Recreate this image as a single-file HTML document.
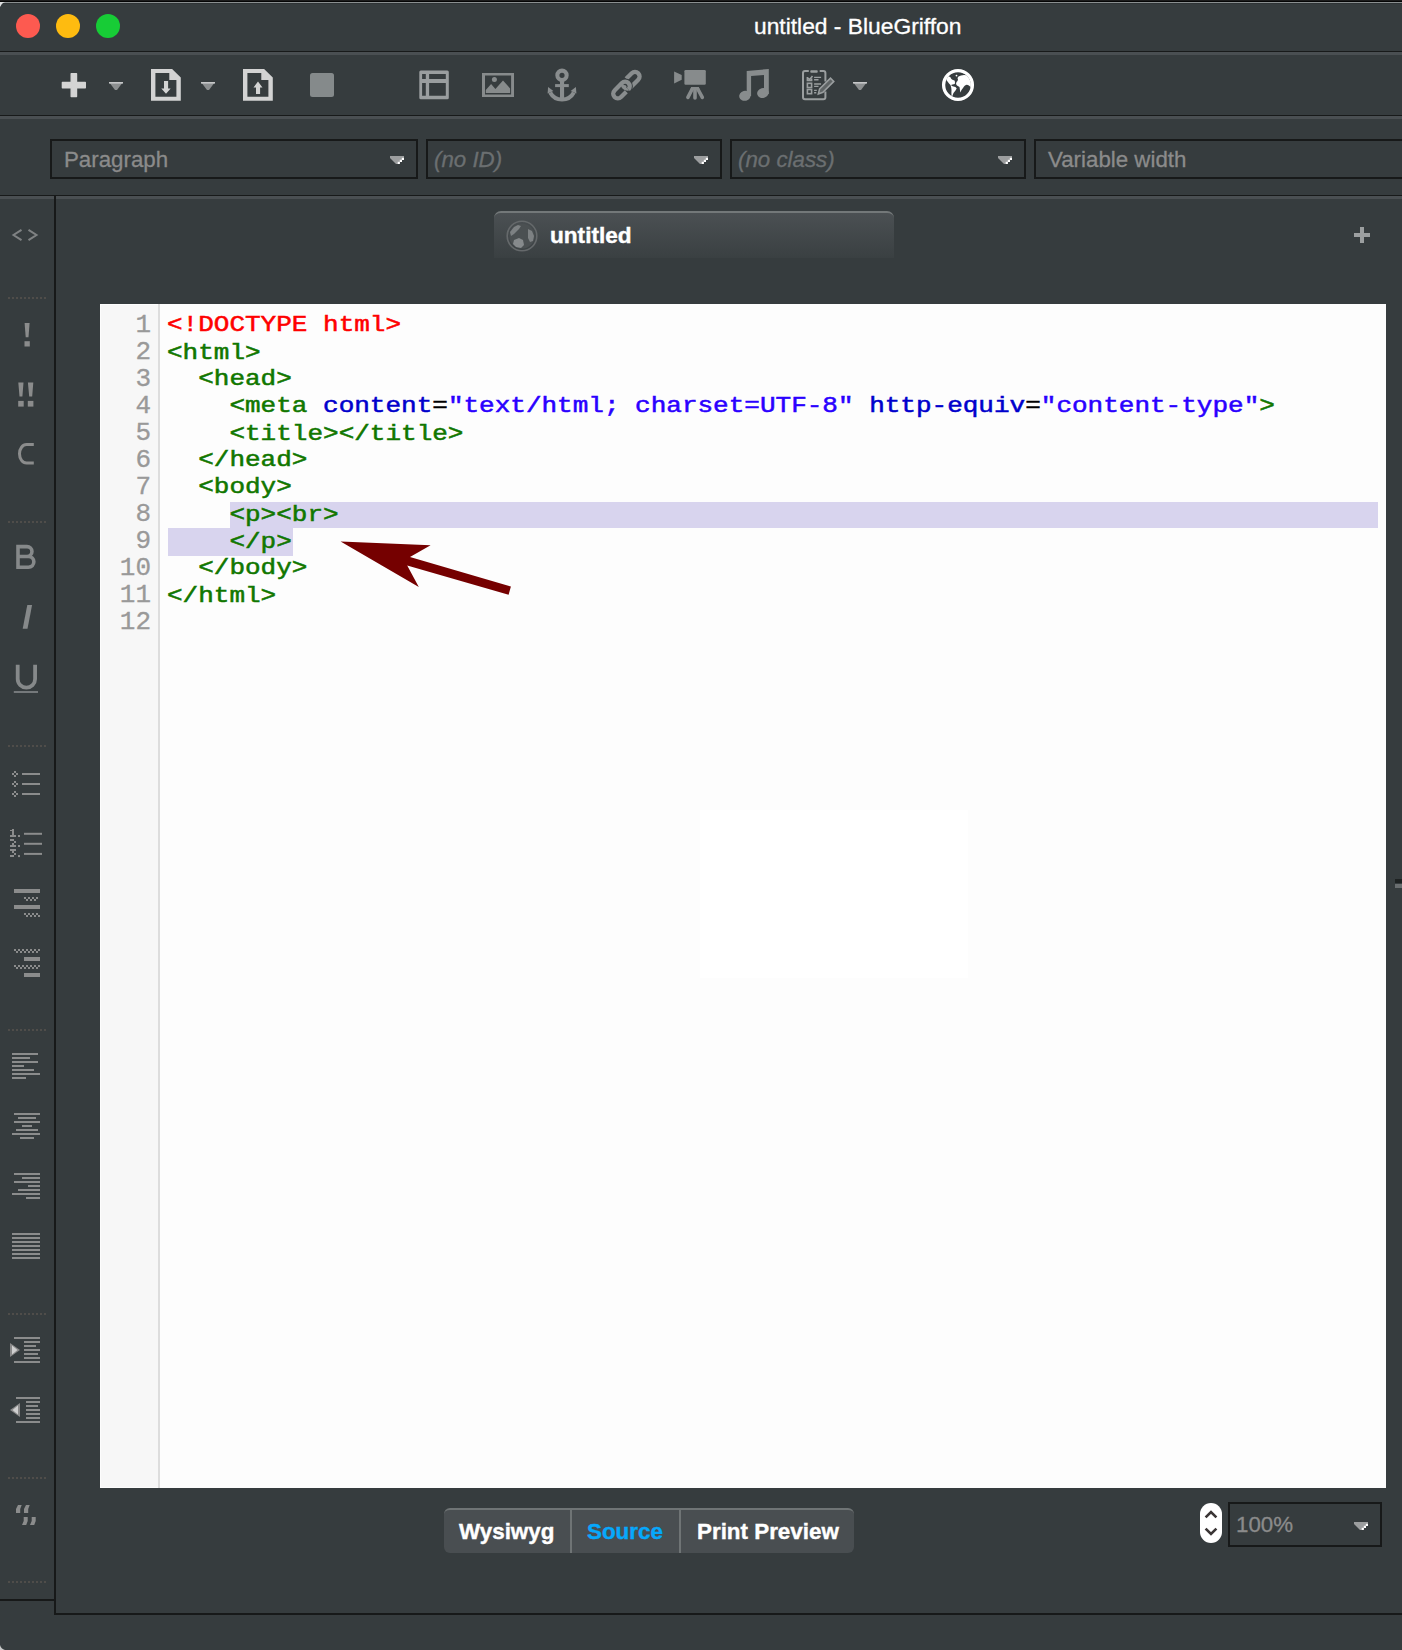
<!DOCTYPE html>
<html>
<head>
<meta charset="utf-8">
<style>
html,body{margin:0;padding:0;}
body{width:1402px;height:1650px;background:#363c3e;position:relative;overflow:hidden;font-family:"Liberation Sans",sans-serif;}
.a{position:absolute;}
.hl{position:absolute;left:0;width:1402px;}
.dd{position:absolute;top:139px;height:36px;border:2px solid #171919;background:#363c3e;}
.ddt{position:absolute;left:12px;top:6px;font-size:22.3px;color:#8b8b8b;white-space:nowrap;-webkit-text-stroke:0.3px currentColor;}
.ddi{font-style:italic;color:#6b6f71;}
.code{position:absolute;left:167px;top:312px;font-family:"Liberation Mono",monospace;font-size:26px;line-height:30.68px;white-space:pre;color:#000;transform:scale(1,0.88);transform-origin:0 0;-webkit-text-stroke:0.6px currentColor;}
.ln{position:absolute;left:101px;top:312px;width:50px;text-align:right;font-family:"Liberation Mono",monospace;font-size:26px;line-height:27px;color:#999;white-space:pre;-webkit-text-stroke:0.3px #999;}
.t{color:#117700;}
.m{color:#ff0000;}
.at{color:#0000cc;}
.s{color:#2a00ff;}
.eq{color:#000;}
.dots{position:absolute;left:8px;width:40px;height:2px;background-image:linear-gradient(90deg,#56524e 0 2px,transparent 2px 4px);background-size:4px 2px;}
</style>
</head>
<body>
<!-- title bar -->
<div class="hl" style="top:0;height:1px;background:#1c1c1c"></div>
<div class="hl" style="top:1px;height:1px;background:#050505"></div>
<div class="hl" style="top:2px;height:1px;background:#8a8f90"></div>
<div class="hl" style="top:3px;height:1px;background:#2f3436"></div>
<div class="a" style="left:16px;top:14px;width:24px;height:24px;border-radius:50%;background:#fd5a50"></div>
<div class="a" style="left:56px;top:14px;width:24px;height:24px;border-radius:50%;background:#febb10"></div>
<div class="a" style="left:96px;top:14px;width:24px;height:24px;border-radius:50%;background:#17cc36"></div>
<div class="a" style="left:754px;top:13.4px;font-size:22.8px;color:#fff;white-space:nowrap;-webkit-text-stroke:0.3px #fff">untitled - BlueGriffon</div>
<div class="hl" style="top:51px;height:1px;background:#181a1a"></div>
<div class="hl" style="top:52px;height:3px;background:#4a4f52"></div>

<!-- toolbar separator -->
<div class="hl" style="top:115px;height:1px;background:#181a1a"></div>
<div class="hl" style="top:116px;height:3px;background:#4a4f52"></div>

<!-- format toolbar -->
<div class="dd" style="left:50px;width:364px"><div class="ddt">Paragraph</div></div>
<div class="dd" style="left:426px;width:292px"><div class="ddt ddi" style="left:6px">(no ID)</div></div>
<div class="dd" style="left:730px;width:292px"><div class="ddt ddi" style="left:6px">(no class)</div></div>
<div class="dd" style="left:1034px;width:400px"><div class="ddt">Variable width</div></div>

<div class="hl" style="top:195px;height:1px;background:#181a1a"></div>
<div class="hl" style="top:196px;height:3px;background:#4a4f52"></div>

<!-- sidebar -->
<div class="a" style="left:54px;top:195px;width:2px;height:1420px;background:#171919"></div>
<div class="a" style="left:0;top:1599px;width:55px;height:2px;background:#171919"></div>
<div class="a" style="left:55px;top:1613px;width:1347px;height:2px;background:#171919"></div>

<!-- tab -->
<div class="a" style="left:494px;top:211px;width:400px;height:47px;border-radius:7px 7px 0 0;background:linear-gradient(#4b5053,#3a4042);border-top:2px solid #737879;box-sizing:border-box"></div>
<div class="a" style="left:550px;top:223px;font-size:22.6px;font-weight:bold;color:#fff;-webkit-text-stroke:0.4px #fff">untitled</div>

<!-- editor -->
<div class="a" style="left:100px;top:304px;width:1286px;height:1184px;background:#fdfdfd"></div>
<div class="a" style="left:700px;top:810px;width:268px;height:168px;background:#fff"></div>
<div class="a" style="left:101px;top:305px;width:57px;height:1182px;background:#f7f7f7"></div>
<div class="a" style="left:158px;top:304px;width:2px;height:1184px;background:#dddddd"></div>
<div class="a" style="left:230px;top:502px;width:1148px;height:26px;background:#d8d4ee"></div>
<div class="a" style="left:168px;top:528px;width:125px;height:28px;background:#d8d4ee"></div>
<div class="ln">1
2
3
4
5
6
7
8
9
10
11
12</div>
<div class="code"><span class="m">&lt;!DOCTYPE html&gt;</span>
<span class="t">&lt;html&gt;</span>
<span class="t">  &lt;head&gt;</span>
<span class="t">    &lt;meta</span> <span class="at">content</span><span class="eq">=</span><span class="s">"text/html; charset=UTF-8"</span> <span class="at">http-equiv</span><span class="eq">=</span><span class="s">"content-type"</span><span class="t">&gt;</span>
<span class="t">    &lt;title&gt;&lt;/title&gt;</span>
<span class="t">  &lt;/head&gt;</span>
<span class="t">  &lt;body&gt;</span>
<span class="t">    &lt;p&gt;&lt;br&gt;</span>
<span class="t">    &lt;/p&gt;</span>
<span class="t">  &lt;/body&gt;</span>
<span class="t">&lt;/html&gt;</span>
</div>

<!-- arrow -->
<svg class="a" style="left:0;top:0" width="1402" height="1650"><polygon fill="#750000" points="340.6,541.5 430.6,545.2 410,557.1 510.9,586.6 508.6,594.8 407.2,565.5 418.8,586.9"/></svg>

<!-- bottom buttons -->
<div class="a" style="left:444px;top:1508px;width:410px;height:45px;border-radius:6px;background:#494e51;border-top:2px solid #6f7475;box-sizing:border-box"></div>
<div class="a" style="left:570px;top:1510px;width:2px;height:43px;background:#6f7475"></div>
<div class="a" style="left:679px;top:1510px;width:2px;height:43px;background:#6f7475"></div>
<div class="a" style="left:459px;top:1519px;font-size:22.4px;font-weight:bold;color:#fff;-webkit-text-stroke:0.4px #fff">Wysiwyg</div>
<div class="a" style="left:587px;top:1519px;font-size:22.4px;font-weight:bold;color:#06a8fc;-webkit-text-stroke:0.4px #06a8fc">Source</div>
<div class="a" style="left:697px;top:1519px;font-size:22.4px;font-weight:bold;color:#fff;-webkit-text-stroke:0.4px #fff">Print Preview</div>

<!-- zoom -->
<div class="a" style="left:1200px;top:1503px;width:22px;height:40px;border-radius:11px;background:#fff"></div>
<div class="dd" style="left:1228px;top:1502px;width:150px;height:41px"><div class="ddt" style="left:6px;top:8px">100%</div></div>
<!--ICONS-->
<svg class="a" style="left:0;top:0" width="1402" height="1650">
<path fill="#d4d4d4" stroke="#d4d4d4" stroke-width="1.4" stroke-linejoin="round" d="M71.2,73.7 h5.3 v8.8 h8.8 v5.3 h-8.8 v8.8 h-5.3 v-8.8 h-8.8 v-5.3 h8.8 z"/>
<path fill="#8c8f90" d="M109,82 h14 l-6,8 h-2 z"/><rect x="109" y="82" width="14" height="1.6" fill="#c6c7c8"/>
<path fill="#8c8f90" d="M201,82 h14 l-6,8 h-2 z"/><rect x="201" y="82" width="14" height="1.6" fill="#c6c7c8"/>
<path fill="#8c8f90" d="M853,82 h14 l-6,8 h-2 z"/><rect x="853" y="82" width="14" height="1.6" fill="#c6c7c8"/>
<path fill="#d3d3d3" fill-rule="evenodd" d="M151,69 L172.1,69 L180.8,77.6 L180.8,100.8 L151,100.8 Z M155.4,73.1 L169.3,73.1 L169.3,80.1 L176.4,80.1 L176.4,96.7 L155.4,96.7 Z"/>
<path fill="#d3d3d3" d="M164,81 h4.1 v7.4 h2.6 l-4.7,5.4 l-4.7,-5.4 h2.7 z"/>
<path fill="#d3d3d3" fill-rule="evenodd" d="M243,69 L264.1,69 L272.8,77.6 L272.8,100.8 L243,100.8 Z M247.4,73.1 L261.3,73.1 L261.3,80.1 L268.4,80.1 L268.4,96.7 L247.4,96.7 Z"/>
<path fill="#d3d3d3" d="M258,81.5 l4.5,6 h-2.4 v6.5 h-4.1 v-6.5 h-2.5 z"/>
<rect x="310" y="73" width="24" height="24" rx="2.5" fill="#858a8b"/>
<path fill="#9a9e9f" fill-rule="evenodd" d="M420.8,70.6 h26.5 a1.5,1.5 0 0 1 1.5,1.5 v25.6 a1.5,1.5 0 0 1 -1.5,1.5 h-26.5 a1.5,1.5 0 0 1 -1.5,-1.5 v-25.6 a1.5,1.5 0 0 1 1.5,-1.5 z M422.1,74 h3.7 v5.1 h-3.7 z M429.1,74 h16.7 v5.1 h-16.7 z M422.1,83 h3.7 v12.8 h-3.7 z M429.1,83 h16.7 v12.8 h-16.7 z"/>
<path fill="#878b8c" fill-rule="evenodd" d="M482,73 h32 v24 h-32 z M485,75.6 v18.9 h26.1 v-18.9 z"/>
<path fill="#878b8c" d="M485.8,90.1 L491.1,84.1 L495.4,89 L503,80.4 L510.1,88.4 L510.1,93.1 L485.8,93.1 Z"/><circle cx="494.4" cy="79.4" r="2.5" fill="#878b8c"/>
<g fill="#898d8e" transform="translate(542,65)"><path fill-rule="evenodd" d="M20,3.6 a6.7,6.7 0 1 1 0,13.4 a6.7,6.7 0 1 1 0,-13.4 z M20,7.7 a2.6,2.6 0 1 0 0,5.2 a2.6,2.6 0 1 0 0,-5.2 z"/><rect x="18" y="15" width="4.1" height="19"/><rect x="13.1" y="19.1" width="13.7" height="3"/><path d="M6.4,28.5 A15.5,15.5 0 0 0 33.6,28.5 L30.1,26.6 A11.5,11.5 0 0 1 9.9,26.6 Z"/><path d="M6.1,22 L5.6,28.6 L11.4,26 Z"/><path d="M33.9,22 L34.4,28.6 L28.6,26 Z"/></g>
<g transform="translate(626.5,85) rotate(-45)" fill="none" stroke-linecap="butt"><path d="M4.1,-4.6 L12,-4.6 A4.6,4.6 0 0 1 12,4.6 L1.4,4.6 A4.6,4.6 0 0 1 1.4,-4.6" stroke="#898d8e" stroke-width="4.3"/><path d="M-1.9,-4.6 A4.6,4.6 0 0 1 -1.9,4.6" stroke="#363c3e" stroke-width="6.3"/><path d="M-4.9,4.6 L-12.3,4.6 A4.6,4.6 0 0 1 -12.3,-4.6 L-1.9,-4.6 A4.6,4.6 0 0 1 -1.9,4.6" stroke="#898d8e" stroke-width="4.3"/></g>
<g fill="#878b8c" transform="translate(670,65)"><path d="M4.1,6.6 L11.7,10 L11.7,14.8 L4.1,18.5 Z"/><rect x="14.4" y="5.1" width="21.4" height="14.7" rx="1.2"/><path d="M21.2,22 h7.6 l1,3 h-9.6 z"/></g>
<g stroke="#878b8c" stroke-width="3.6" stroke-linecap="round" transform="translate(670,65)"><line x1="22.2" y1="24" x2="17.9" y2="32.4"/><line x1="25" y1="24" x2="25" y2="33"/><line x1="27.8" y1="24" x2="32.3" y2="32.4"/></g>
<g fill="#888c8d" transform="translate(734,65)"><path d="M12.7,6 L34.8,4 L34.8,29 L30,29 L30,10 L17.1,11.1 L17.1,31 L12.7,31 Z"/><ellipse cx="10.9" cy="30.8" rx="5.8" ry="5" transform="rotate(-15 10.9 30.8)"/><ellipse cx="28.9" cy="28" rx="5.8" ry="5" transform="rotate(-15 28.9 28)"/></g>
<g transform="translate(798,65)" fill="none" stroke="#9a9e9f" stroke-width="2"><path d="M10.8,6.1 H7 a2,2 0 0 0 -2,2 V32.2 a2,2 0 0 0 2,2 H25.4 a2,2 0 0 0 2,-2 V26.5"/><path d="M27.4,16.4 V8.1 a2,2 0 0 0 -2,-2 H21.7"/><rect x="9.4" y="18.3" width="4.2" height="4.2" stroke-width="1.6"/><rect x="9.4" y="24.5" width="4.2" height="4.2" stroke-width="1.6"/><path d="M9.4,12 V15.5 H13.6 V13.5" stroke-width="1.6"/><path d="M10,13 L11.5,14.8 L14.5,11" stroke-width="1.6"/><path d="M16.1,12.4 H23.1 M16.1,14.7 H20.5 M16.1,19 H23.1 M16.1,21.4 H20.5 M16.1,25.4 H18.8 M16.1,27.7 H18.3" stroke-width="1.4"/><path d="M20.3,29 L21.6,24 L32.5,13.1 L35.8,16.4 L24.9,27.3 Z" stroke-width="1.5" fill="#5f6465"/></g><rect x="810.3" y="70.3" width="7.4" height="2.4" rx="0.8" fill="#9a9e9f"/>
<g transform="translate(938,65)"><circle cx="20" cy="20" r="12.9" fill="#ffffff"/><path fill="#363c3e" d="M10.2,10.5 L12,8.5 L16,7 L20,6.8 L24,7.3 L28.7,10.3 L26,10 L23,10.5 L20.5,11.5 L19.5,13 L20,14.5 L19.5,16 L18.5,17 L18,19 L19,20.5 L21.5,22 L22.3,27.5 L23.5,25 L25,23 L26,21.5 L27,20.5 L28.5,19.8 L30,20 L31.5,21 L32.5,22 L33,30 L28,33 L20,33.5 L15,32.5 L14.3,31 L15.5,28 L17.5,25.5 L18.7,23.5 L17.5,22 L15.5,21.5 L14,21 L13,20 L14.5,19.5 L16.8,19 L17,17 L16.5,15.5 L15,15 L14,14.5 L13,13.5 L12.7,12.5 L11.5,11.8 Z"/><path fill="#363c3e" d="M8,14.5 L9.5,16.5 L11,18.5 L12.5,20 L13.2,22.5 L13.5,25 L13.4,28 L13.6,31 L10,28.5 L7.5,25 L6.8,20 L7.2,16 Z"/><circle cx="18.5" cy="10.6" r="0.9" fill="#fff"/><circle cx="20" cy="20" r="14.4" fill="none" stroke="#ffffff" stroke-width="3.3"/></g>
<path fill="#9c9e9f" d="M390,156 h14 v2.5 l-6,5.5 h-2 l-6,-6 z"/><rect x="401.8" y="157.8" width="2.2" height="2.2" fill="#fff"/><rect x="399.8" y="159.8" width="2.2" height="2.2" fill="#fff"/><rect x="397.7" y="161.8" width="2.2" height="2.2" fill="#fff"/>
<path fill="#9c9e9f" d="M694,156 h14 v2.5 l-6,5.5 h-2 l-6,-6 z"/><rect x="705.8" y="157.8" width="2.2" height="2.2" fill="#fff"/><rect x="703.8" y="159.8" width="2.2" height="2.2" fill="#fff"/><rect x="701.7" y="161.8" width="2.2" height="2.2" fill="#fff"/>
<path fill="#9c9e9f" d="M998,156 h14 v2.5 l-6,5.5 h-2 l-6,-6 z"/><rect x="1009.8" y="157.8" width="2.2" height="2.2" fill="#fff"/><rect x="1007.8" y="159.8" width="2.2" height="2.2" fill="#fff"/><rect x="1005.7" y="161.8" width="2.2" height="2.2" fill="#fff"/>
<path fill="#9c9e9f" d="M1354,1522 h14 v2.5 l-6,5.5 h-2 l-6,-6 z"/><rect x="1365.8" y="1523.8" width="2.2" height="2.2" fill="#fff"/><rect x="1363.8" y="1525.8" width="2.2" height="2.2" fill="#fff"/><rect x="1361.7" y="1527.8" width="2.2" height="2.2" fill="#fff"/>
<path fill="#9c9fa0" d="M1360,227 h4 v6 h6 v4 h-6 v6 h-4 v-6 h-6 v-4 h6 z"/>
<g><circle cx="522" cy="236" r="14.8" fill="none" stroke="#65696b" stroke-width="1.6"/><circle cx="522" cy="236" r="12.6" fill="#4b5052"/><path fill="#7d8183" d="M510,232 L514,227 L518,225 L521,226 L519,229 L516,232 L514,234 L511,236 Z"/><path fill="#7d8183" d="M528,229 L532,231 L534,236 L533,241 L530,242 L528,238 Z"/><path fill="#868a8c" d="M514,240 L519,238 L523,240 L524,245 L521,248 L516,247 L513,244 Z"/></g>
<path fill="none" stroke="#3a3535" stroke-width="2.6" d="M1205.6,1517.4 L1211,1512 L1216.4,1517.4 M1205.6,1528.6 L1211,1534 L1216.4,1528.6"/>
<path fill="none" stroke="#7f8283" stroke-width="2" d="M21.5,229.8 L13.5,235 L21.5,240.2 M28.5,229.8 L36.5,235 L28.5,240.2"/>
<rect x="8" y="297" width="2" height="2" fill="#4f4d4a"/>
<rect x="12" y="297" width="2" height="2" fill="#4f4d4a"/>
<rect x="16" y="297" width="2" height="2" fill="#4f4d4a"/>
<rect x="20" y="297" width="2" height="2" fill="#4f4d4a"/>
<rect x="24" y="297" width="2" height="2" fill="#4f4d4a"/>
<rect x="28" y="297" width="2" height="2" fill="#4f4d4a"/>
<rect x="32" y="297" width="2" height="2" fill="#4f4d4a"/>
<rect x="36" y="297" width="2" height="2" fill="#4f4d4a"/>
<rect x="40" y="297" width="2" height="2" fill="#4f4d4a"/>
<rect x="44" y="297" width="2" height="2" fill="#4f4d4a"/>
<rect x="8" y="521" width="2" height="2" fill="#4f4d4a"/>
<rect x="12" y="521" width="2" height="2" fill="#4f4d4a"/>
<rect x="16" y="521" width="2" height="2" fill="#4f4d4a"/>
<rect x="20" y="521" width="2" height="2" fill="#4f4d4a"/>
<rect x="24" y="521" width="2" height="2" fill="#4f4d4a"/>
<rect x="28" y="521" width="2" height="2" fill="#4f4d4a"/>
<rect x="32" y="521" width="2" height="2" fill="#4f4d4a"/>
<rect x="36" y="521" width="2" height="2" fill="#4f4d4a"/>
<rect x="40" y="521" width="2" height="2" fill="#4f4d4a"/>
<rect x="44" y="521" width="2" height="2" fill="#4f4d4a"/>
<rect x="8" y="745" width="2" height="2" fill="#4f4d4a"/>
<rect x="12" y="745" width="2" height="2" fill="#4f4d4a"/>
<rect x="16" y="745" width="2" height="2" fill="#4f4d4a"/>
<rect x="20" y="745" width="2" height="2" fill="#4f4d4a"/>
<rect x="24" y="745" width="2" height="2" fill="#4f4d4a"/>
<rect x="28" y="745" width="2" height="2" fill="#4f4d4a"/>
<rect x="32" y="745" width="2" height="2" fill="#4f4d4a"/>
<rect x="36" y="745" width="2" height="2" fill="#4f4d4a"/>
<rect x="40" y="745" width="2" height="2" fill="#4f4d4a"/>
<rect x="44" y="745" width="2" height="2" fill="#4f4d4a"/>
<rect x="8" y="1029" width="2" height="2" fill="#4f4d4a"/>
<rect x="12" y="1029" width="2" height="2" fill="#4f4d4a"/>
<rect x="16" y="1029" width="2" height="2" fill="#4f4d4a"/>
<rect x="20" y="1029" width="2" height="2" fill="#4f4d4a"/>
<rect x="24" y="1029" width="2" height="2" fill="#4f4d4a"/>
<rect x="28" y="1029" width="2" height="2" fill="#4f4d4a"/>
<rect x="32" y="1029" width="2" height="2" fill="#4f4d4a"/>
<rect x="36" y="1029" width="2" height="2" fill="#4f4d4a"/>
<rect x="40" y="1029" width="2" height="2" fill="#4f4d4a"/>
<rect x="44" y="1029" width="2" height="2" fill="#4f4d4a"/>
<rect x="8" y="1313" width="2" height="2" fill="#4f4d4a"/>
<rect x="12" y="1313" width="2" height="2" fill="#4f4d4a"/>
<rect x="16" y="1313" width="2" height="2" fill="#4f4d4a"/>
<rect x="20" y="1313" width="2" height="2" fill="#4f4d4a"/>
<rect x="24" y="1313" width="2" height="2" fill="#4f4d4a"/>
<rect x="28" y="1313" width="2" height="2" fill="#4f4d4a"/>
<rect x="32" y="1313" width="2" height="2" fill="#4f4d4a"/>
<rect x="36" y="1313" width="2" height="2" fill="#4f4d4a"/>
<rect x="40" y="1313" width="2" height="2" fill="#4f4d4a"/>
<rect x="44" y="1313" width="2" height="2" fill="#4f4d4a"/>
<rect x="8" y="1477" width="2" height="2" fill="#4f4d4a"/>
<rect x="12" y="1477" width="2" height="2" fill="#4f4d4a"/>
<rect x="16" y="1477" width="2" height="2" fill="#4f4d4a"/>
<rect x="20" y="1477" width="2" height="2" fill="#4f4d4a"/>
<rect x="24" y="1477" width="2" height="2" fill="#4f4d4a"/>
<rect x="28" y="1477" width="2" height="2" fill="#4f4d4a"/>
<rect x="32" y="1477" width="2" height="2" fill="#4f4d4a"/>
<rect x="36" y="1477" width="2" height="2" fill="#4f4d4a"/>
<rect x="40" y="1477" width="2" height="2" fill="#4f4d4a"/>
<rect x="44" y="1477" width="2" height="2" fill="#4f4d4a"/>
<rect x="8" y="1581" width="2" height="2" fill="#4f4d4a"/>
<rect x="12" y="1581" width="2" height="2" fill="#4f4d4a"/>
<rect x="16" y="1581" width="2" height="2" fill="#4f4d4a"/>
<rect x="20" y="1581" width="2" height="2" fill="#4f4d4a"/>
<rect x="24" y="1581" width="2" height="2" fill="#4f4d4a"/>
<rect x="28" y="1581" width="2" height="2" fill="#4f4d4a"/>
<rect x="32" y="1581" width="2" height="2" fill="#4f4d4a"/>
<rect x="36" y="1581" width="2" height="2" fill="#4f4d4a"/>
<rect x="40" y="1581" width="2" height="2" fill="#4f4d4a"/>
<rect x="44" y="1581" width="2" height="2" fill="#4f4d4a"/>
<path fill="#8b8c8c" d="M24.6,323 h5 l-1.1,14.3 h-2.8 z"/><rect x="24.5" y="341.2" width="5.3" height="5.3" fill="#8b8c8c"/>
<path fill="#8b8c8c" d="M18.3,382.6 h5.2 l-1.1,13.9 h-2.9 z M27.9,382.6 h5.4 l-1.1,13.9 h-3 z"/><rect x="18.2" y="400.9" width="5.5" height="5.7" fill="#8b8c8c"/><rect x="27.8" y="400.9" width="5.6" height="5.7" fill="#8b8c8c"/>
<path fill="none" stroke="#8b8c8c" stroke-width="3" d="M33.8,444.5 H26.5 a7,9.3 0 0 0 0,18.6 H33.8"/>
<path fill="none" stroke="#86898a" stroke-width="3.6" d="M18,544.8 V569 M18,546.6 H27 a4.95,4.95 0 0 1 0,9.9 H18 M18,556.5 H28.5 a5.35,5.35 0 0 1 0,10.7 H18"/>
<path fill="#86898a" d="M27.3,605 h4.8 l-4.6,23.8 h-4.8 z"/>
<path fill="none" stroke="#86898a" stroke-width="3.8" d="M17.7,664.8 V679 a8.7,8.7 0 0 0 17.4,0 V664.8"/><rect x="13.8" y="691.2" width="24.2" height="1.6" fill="#86898a"/>
<rect x="14" y="771" width="2" height="2" fill="#8b8c8c"/>
<rect x="12" y="773" width="2" height="2" fill="#8b8c8c"/>
<rect x="16" y="773" width="2" height="2" fill="#8b8c8c"/>
<rect x="14" y="775" width="2" height="2" fill="#8b8c8c"/>
<rect x="22" y="773" width="18" height="2" fill="#8b8c8c"/>
<rect x="14" y="781" width="2" height="2" fill="#8b8c8c"/>
<rect x="12" y="783" width="2" height="2" fill="#8b8c8c"/>
<rect x="16" y="783" width="2" height="2" fill="#8b8c8c"/>
<rect x="14" y="785" width="2" height="2" fill="#8b8c8c"/>
<rect x="22" y="783" width="18" height="2" fill="#8b8c8c"/>
<rect x="14" y="791" width="2" height="2" fill="#8b8c8c"/>
<rect x="12" y="793" width="2" height="2" fill="#8b8c8c"/>
<rect x="16" y="793" width="2" height="2" fill="#8b8c8c"/>
<rect x="14" y="795" width="2" height="2" fill="#8b8c8c"/>
<rect x="22" y="793" width="18" height="2" fill="#8b8c8c"/>
<rect x="24" y="832.8" width="18" height="2" fill="#8b8c8c"/><rect x="18" y="835.0" width="2" height="2" fill="#8b8c8c"/>
<rect x="24" y="842.8" width="18" height="2" fill="#8b8c8c"/><rect x="18" y="845.0" width="2" height="2" fill="#8b8c8c"/>
<rect x="24" y="852.9" width="18" height="2" fill="#8b8c8c"/><rect x="18" y="855.1" width="2" height="2" fill="#8b8c8c"/>
<path fill="#8b8c8c" d="M12,829 h2 v6 h2 v2 h-6 v-2 h2 v-4 h-2 v-1 h2 z M10,839 h4 v2 h-4 z M14,841 h2 v2 h-2 z M12,843 h2 v2 h-2 z M10,845 h6 v2 h-6 z M10,849 h6 v2 h-6 z M12,851 h2 v2 h-2 z M14,853 h2 v2 h-2 z M10,855 h4 v2 h-4 z"/>
<rect x="14" y="889" width="26" height="4" fill="#8b8c8c"/><rect x="14" y="905" width="26" height="4" fill="#8b8c8c"/>
<rect x="24" y="897" width="2" height="2" fill="#8b8c8c"/>
<rect x="26" y="899" width="2" height="2" fill="#8b8c8c"/>
<rect x="28" y="897" width="2" height="2" fill="#8b8c8c"/>
<rect x="30" y="899" width="2" height="2" fill="#8b8c8c"/>
<rect x="32" y="897" width="2" height="2" fill="#8b8c8c"/>
<rect x="34" y="899" width="2" height="2" fill="#8b8c8c"/>
<rect x="36" y="897" width="2" height="2" fill="#8b8c8c"/>
<rect x="24" y="913" width="2" height="2" fill="#8b8c8c"/>
<rect x="26" y="915" width="2" height="2" fill="#8b8c8c"/>
<rect x="28" y="913" width="2" height="2" fill="#8b8c8c"/>
<rect x="30" y="915" width="2" height="2" fill="#8b8c8c"/>
<rect x="32" y="913" width="2" height="2" fill="#8b8c8c"/>
<rect x="34" y="915" width="2" height="2" fill="#8b8c8c"/>
<rect x="36" y="913" width="2" height="2" fill="#8b8c8c"/>
<rect x="38" y="915" width="2" height="2" fill="#8b8c8c"/>
<rect x="24" y="957" width="16" height="4" fill="#8b8c8c"/><rect x="24" y="973" width="16" height="4" fill="#8b8c8c"/>
<rect x="14" y="949" width="2" height="2" fill="#8b8c8c"/>
<rect x="16" y="951" width="2" height="2" fill="#8b8c8c"/>
<rect x="18" y="949" width="2" height="2" fill="#8b8c8c"/>
<rect x="20" y="951" width="2" height="2" fill="#8b8c8c"/>
<rect x="22" y="949" width="2" height="2" fill="#8b8c8c"/>
<rect x="24" y="951" width="2" height="2" fill="#8b8c8c"/>
<rect x="26" y="949" width="2" height="2" fill="#8b8c8c"/>
<rect x="28" y="951" width="2" height="2" fill="#8b8c8c"/>
<rect x="30" y="949" width="2" height="2" fill="#8b8c8c"/>
<rect x="32" y="951" width="2" height="2" fill="#8b8c8c"/>
<rect x="34" y="949" width="2" height="2" fill="#8b8c8c"/>
<rect x="36" y="951" width="2" height="2" fill="#8b8c8c"/>
<rect x="38" y="949" width="2" height="2" fill="#8b8c8c"/>
<rect x="14" y="965" width="2" height="2" fill="#8b8c8c"/>
<rect x="16" y="967" width="2" height="2" fill="#8b8c8c"/>
<rect x="18" y="965" width="2" height="2" fill="#8b8c8c"/>
<rect x="20" y="967" width="2" height="2" fill="#8b8c8c"/>
<rect x="22" y="965" width="2" height="2" fill="#8b8c8c"/>
<rect x="24" y="967" width="2" height="2" fill="#8b8c8c"/>
<rect x="26" y="965" width="2" height="2" fill="#8b8c8c"/>
<rect x="28" y="967" width="2" height="2" fill="#8b8c8c"/>
<rect x="30" y="965" width="2" height="2" fill="#8b8c8c"/>
<rect x="32" y="967" width="2" height="2" fill="#8b8c8c"/>
<rect x="34" y="965" width="2" height="2" fill="#8b8c8c"/>
<rect x="36" y="967" width="2" height="2" fill="#8b8c8c"/>
<rect x="38" y="965" width="2" height="2" fill="#8b8c8c"/>
<rect x="12" y="1053" width="26" height="2" fill="#8b8c8c"/>
<rect x="12" y="1057" width="18" height="2" fill="#8b8c8c"/>
<rect x="12" y="1061" width="26" height="2" fill="#8b8c8c"/>
<rect x="12" y="1065" width="12" height="2" fill="#8b8c8c"/>
<rect x="12" y="1069" width="22" height="2" fill="#8b8c8c"/>
<rect x="12" y="1073" width="28" height="2" fill="#8b8c8c"/>
<rect x="12" y="1077" width="14" height="2" fill="#8b8c8c"/>
<rect x="14" y="1113" width="26" height="2" fill="#8b8c8c"/>
<rect x="18" y="1117" width="18" height="2" fill="#8b8c8c"/>
<rect x="14" y="1121" width="26" height="2" fill="#8b8c8c"/>
<rect x="22" y="1125" width="10" height="2" fill="#8b8c8c"/>
<rect x="16" y="1129" width="22" height="2" fill="#8b8c8c"/>
<rect x="12" y="1133" width="28" height="2" fill="#8b8c8c"/>
<rect x="20" y="1137" width="14" height="2" fill="#8b8c8c"/>
<rect x="14" y="1173" width="26" height="2" fill="#8b8c8c"/>
<rect x="22" y="1177" width="18" height="2" fill="#8b8c8c"/>
<rect x="14" y="1181" width="26" height="2" fill="#8b8c8c"/>
<rect x="28" y="1185" width="12" height="2" fill="#8b8c8c"/>
<rect x="18" y="1189" width="22" height="2" fill="#8b8c8c"/>
<rect x="12" y="1193" width="28" height="2" fill="#8b8c8c"/>
<rect x="26" y="1197" width="14" height="2" fill="#8b8c8c"/>
<rect x="12" y="1233" width="28" height="2" fill="#8b8c8c"/>
<rect x="12" y="1237" width="28" height="2" fill="#8b8c8c"/>
<rect x="12" y="1241" width="28" height="2" fill="#8b8c8c"/>
<rect x="12" y="1245" width="28" height="2" fill="#8b8c8c"/>
<rect x="12" y="1249" width="28" height="2" fill="#8b8c8c"/>
<rect x="12" y="1253" width="28" height="2" fill="#8b8c8c"/>
<rect x="12" y="1257" width="28" height="2" fill="#8b8c8c"/>
<rect x="14" y="1337" width="26" height="2" fill="#8b8c8c"/><rect x="14" y="1361" width="26" height="2" fill="#8b8c8c"/>
<rect x="24" y="1341" width="16" height="2" fill="#8b8c8c"/>
<rect x="24" y="1345" width="12" height="2" fill="#8b8c8c"/>
<rect x="24" y="1349" width="16" height="2" fill="#8b8c8c"/>
<rect x="24" y="1353" width="14" height="2" fill="#8b8c8c"/>
<rect x="24" y="1357" width="16" height="2" fill="#8b8c8c"/>
<path fill="#8a8a8a" d="M10,1343 L20,1350 L10,1357 Z"/><path fill="#cfcfcf" d="M12,1345.5 L17.5,1350 L12,1354.5 Z"/>
<rect x="16" y="1397" width="24" height="2" fill="#8b8c8c"/><rect x="16" y="1421" width="24" height="2" fill="#8b8c8c"/>
<rect x="26" y="1401" width="14" height="2" fill="#8b8c8c"/>
<rect x="26" y="1405" width="12" height="2" fill="#8b8c8c"/>
<rect x="26" y="1409" width="14" height="2" fill="#8b8c8c"/>
<rect x="26" y="1413" width="14" height="2" fill="#8b8c8c"/>
<rect x="26" y="1417" width="14" height="2" fill="#8b8c8c"/>
<path fill="#8a8a8a" d="M20,1403 L10,1410 L20,1417 Z"/><path fill="#cfcfcf" d="M18,1405.5 L12.5,1410 L18,1414.5 Z"/>
<path fill="#8b8c8c" d="M18,1505 h3.7 l-1.5,4 v4 h-4.2 v-4 z M26,1505 h3.7 l-1.5,4 v4 h-4.2 v-4 z"/>
<path fill="#8b8c8c" d="M23.7,1517 h4 v4 l-1.5,4 h-4.2 l1.7,-4 z M31.7,1517 h4 v4 l-1.5,4 h-4.2 l1.7,-4 z"/>
<path d="M0,2 H5 Q1.5,3 0.5,6.5 H0 Z" fill="#dcdedf"/>
<path d="M0,1650 V1645 Q1,1649 5,1650 Z" fill="#c8caca"/>
<rect x="1395" y="879" width="7" height="4" fill="#1e2222"/><rect x="1395" y="884" width="7" height="4" fill="#6a6e70"/>
</svg>
<!--/ICONS-->
</body>
</html>
